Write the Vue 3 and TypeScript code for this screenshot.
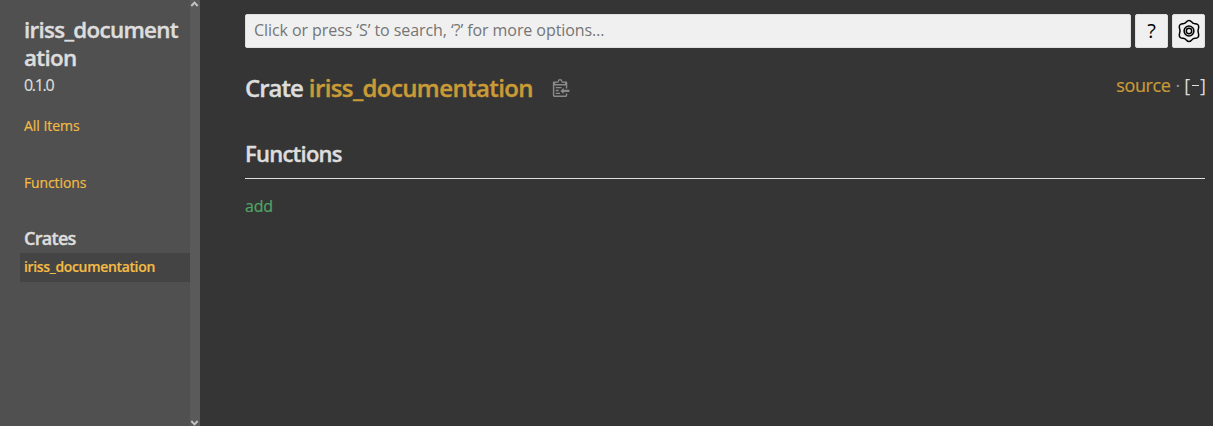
<script setup lang="ts">
const crateName = 'iriss_documentation'
const placeholder = 'Click or press ‘S’ to search, ‘?’ for more options…'
</script>

<template>
  <div class="page">
    <nav class="sidebar">
      <div class="side-content">
        <h2 class="side-title">{{ crateName }}</h2>
        <div class="version">0.1.0</div>
        <a class="side-link all-items">All Items</a>
        <a class="side-link functions">Functions</a>
        <h3 class="side-heading">Crates</h3>
        <a class="current">{{ crateName }}</a>
      </div>
      <div class="scrollbar">
        <svg width="10" height="8" viewBox="0 0 10 8"><path d="M1.3 6 4.5 2.6 7.7 6" /></svg>
        <svg width="10" height="8" viewBox="0 0 10 8"><path d="M1.3 3 4.5 6.4 7.7 3" /></svg>
      </div>
    </nav>
    <main class="main">
      <div class="search-row">
        <input class="search" type="text" :placeholder="placeholder" />
        <button class="tool">?</button>
        <button class="tool" aria-label="Settings">
          <svg width="24" height="24" viewBox="0 0 24 24" class="gear">
            <path d="M9.6 2.7C10.8 1 13.2 1 14.4 2.7C15.3 4.1 16.2 4.6 17.9 4.7C20.2 4.6 21.9 5.8 21.7 8.2C20.7 10.8 20.7 13.2 21.7 15.8C21.9 18.2 20.2 19.4 17.9 19.3C16.2 19.4 15.3 19.9 14.4 21.3C13.2 23 10.8 23 9.6 21.3C8.7 19.9 7.8 19.4 6.1 19.3C3.8 19.4 2.1 18.2 2.3 15.8C3.3 13.2 3.3 10.8 2.3 8.2C2.1 5.8 3.8 4.6 6.1 4.7C7.8 4.6 8.7 4.1 9.6 2.7Z" />
            <circle cx="12" cy="12" r="4.9" />
            <circle cx="12" cy="12" r="2.7" />
          </svg>
        </button>
      </div>
      <div class="heading-row">
        <h1 class="heading"><span>Crate</span><a class="crate">{{ crateName }}</a></h1>
        <svg class="copy" width="19" height="18" viewBox="0 0 24 25">
          <path d="M18 20h2v3c0 1-1 2-2 2H2c-.998 0-2-1-2-2V5c0-.911.755-1.667 1.667-1.667h5A3.323 3.323 0 0110 0a3.323 3.323 0 013.333 3.333h5C19.245 3.333 20 4.09 20 5v8.333h-2V9H2v14h16v-3zM3 7h14c0-.911-.793-1.667-1.75-1.667H13.5c-.957 0-1.75-.755-1.75-1.666C11.75 2.755 10.957 2 10 2s-1.75.755-1.75 1.667c0 .911-.793 1.666-1.75 1.666H4.75C3.793 5.333 3 6.09 3 7z" />
          <path d="M4 19h6v2H4zM12 11H4v2h8zM4 17h4v-2H4zM15 15v-3l-4.5 4.5L15 21v-3l8.027-.032L23 15z" />
        </svg>
        <div class="out">
          <a class="source">source</a><span class="dot">·</span><a class="toggle">[<span class="minus"></span>]</a>
        </div>
      </div>
      <h2 class="section">Functions</h2>
      <a class="fn">add</a>
    </main>
  </div>
</template>

<style>
body {
  margin: 0;
  background: #353535;
}
</style>

<style scoped>
.page {
  display: flex;
  height: 426px;
  overflow: hidden;
  background: #353535;
  color: #ddd;
  font-family: "Open Sans", "Noto Sans", sans-serif;
}
h1, h2, h3 {
  margin: 0;
  font-weight: 600;
  -webkit-text-stroke: 0.4px currentColor;
}
.sidebar {
  display: flex;
  width: 200px;
  flex: none;
  background: #505050;
}
.side-content {
  width: 170px;
  padding: 16px 0 0 20px;
}
.side-title {
  padding-left: 4px;
  font-size: 22.4px;
  line-height: 28px;
  letter-spacing: -0.7px;
  word-break: break-all;
}
.version {
  padding-left: 4px;
  font-size: 16px;
  line-height: 26px;
  letter-spacing: -1.3px;
  -webkit-text-stroke: 0.2px currentColor;
}
.side-link, .current {
  display: block;
  padding-left: 4px;
  font-size: 14px;
  line-height: 28px;
  letter-spacing: -0.12px;
  color: #f2bb45;
  -webkit-text-stroke: 0.2px currentColor;
}
.side-link.all-items {
  margin-top: 14px;
  letter-spacing: -0.03px;
}
.functions {
  margin-top: 29px;
}
.side-heading {
  margin: 28px 0 2px;
  padding-left: 4px;
  font-size: 18px;
  line-height: 26px;
  letter-spacing: -0.7px;
}
.current {
  height: 29px;
  background: #444;
  font-weight: 600;
  letter-spacing: -0.34px;
}
.scrollbar {
  display: flex;
  flex-direction: column;
  justify-content: space-between;
  width: 10px;
  background: #5a5a5a;
}
.scrollbar path {
  fill: none;
  stroke: #c4c4c4;
  stroke-width: 2;
}
.main {
  flex: 1;
  padding: 14px 8px 0 45px;
}
.search-row {
  display: flex;
  height: 34px;
}
.search, .tool {
  box-sizing: border-box;
  height: 34px;
  border: 1px solid #e0e0e0;
  border-radius: 2px;
  background: #f0f0f0;
  font-family: inherit;
}
.search {
  flex: 1;
  min-width: 0;
  padding: 0 8px 2px;
  font-size: 16px;
  letter-spacing: -0.07px;
}
.search::placeholder {
  color: #757575;
  opacity: 1;
}
.tool {
  display: flex;
  align-items: center;
  justify-content: center;
  width: 33px;
  margin-left: 4px;
  padding: 0 0 1px;
  font-size: 20px;
  color: #000;
}
.gear {
  flex: none;
  margin-top: 1px;
  fill: none;
  stroke: #000;
  stroke-width: 1.5;
}
.heading-row {
  display: flex;
  align-items: center;
  height: 34px;
  margin-top: 23px;
}
.heading {
  display: flex;
  gap: 6px;
  font-size: 24px;
  line-height: 34px;
  letter-spacing: -1px;
}
.crate {
  color: #c99b36;
  letter-spacing: -0.6px;
}
.copy {
  margin-left: 19px;
  fill: #8a8a8a;
}
.out {
  display: flex;
  margin: -7px 0 0 auto;
  font-size: 18px;
  line-height: 28px;
}
.source {
  color: #c99b36;
  letter-spacing: -0.4px;
  -webkit-text-stroke: 0.2px currentColor;
}
.dot {
  margin: 0 4px 0 5px;
  color: #999;
}
.toggle {
  display: flex;
  align-items: center;
  margin-right: -1px;
}
.minus {
  width: 7px;
  height: 1px;
  margin: 2px 1.5px 0;
  background: #ddd;
}
.section {
  height: 40px;
  margin-top: 33px;
  border-bottom: 1px solid #ddd;
  font-size: 22px;
  line-height: 30px;
  letter-spacing: -0.75px;
}
.fn {
  display: block;
  margin-top: 15px;
  font-size: 16px;
  line-height: 24px;
  letter-spacing: -0.25px;
  color: #50a564;
  -webkit-text-stroke: 0.2px currentColor;
}
</style>
